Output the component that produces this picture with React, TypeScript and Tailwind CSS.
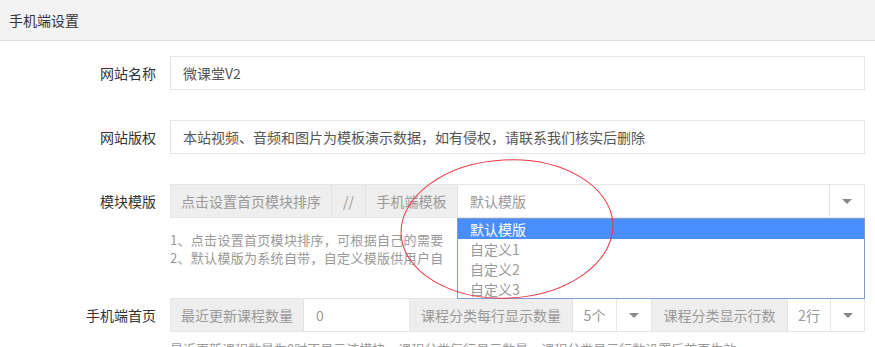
import React from 'react';

const font = "font-['Noto_Sans_CJK_SC','Noto_Sans',sans-serif]";

const Caret = () => (
  <svg viewBox="0 0 10 5" className="w-[10px] h-[5px] fill-[#888]">
    <path d="M0 0h10L5 5z" />
  </svg>
);

const Row = ({ label, children }: { label: string; children: React.ReactNode }) => (
  <div className="flex items-center">
    <div className="w-[156px] text-right text-[14px] text-[#333] shrink-0">{label}</div>
    <div className="ml-[14px] w-[695px]">{children}</div>
  </div>
);

const Addon = ({ w, children }: { w: string; children: React.ReactNode }) => (
  <div className={`${w} h-full flex items-center justify-center bg-[#eee] text-[#999] border-r border-[#e3e3e3] shrink-0`}>
    {children}
  </div>
);

export default function App() {
  return (
    <div className={`${font} relative w-[875px] h-[347px] overflow-hidden bg-white text-[14px]`}>
      {/* Header */}
      <div className="h-[41px] bg-[#f3f3f3] border-b border-[#dedede] flex items-center pl-[9px] text-[14px] text-[#333]">
        手机端设置
      </div>

      <div className="pt-[15px]">
        <Row label="网站名称">
          <div className="h-[34px] border border-[#e6e6e6] flex items-center px-[12px] text-[#555]">微课堂V2</div>
        </Row>

        <div className="mt-[30px]">
          <Row label="网站版权">
            <div className="h-[34px] border border-[#e6e6e6] flex items-center px-[12px] text-[#555]">
              本站视频、音频和图片为模板演示数据，如有侵权，请联系我们核实后删除
            </div>
          </Row>
        </div>

        <div className="mt-[30px]">
          <Row label="模块模版">
            <div className="h-[34px] border border-[#e6e6e6] flex">
              <Addon w="w-[161px]">点击设置首页模块排序</Addon>
              <Addon w="w-[34px]">//</Addon>
              <Addon w="w-[92px]">手机端模板</Addon>
              <div className="flex-1 flex items-center px-[12px] text-[#999] border-r border-[#e6e6e6]">默认模版</div>
              <div className="w-[34px] flex items-center justify-center">
                <Caret />
              </div>
            </div>
          </Row>
        </div>

        {/* help text, partly hidden under the open list */}
        <div className="ml-[170px] mt-[13px] w-[287px] overflow-hidden whitespace-nowrap text-[13px] tracking-[0.3px] leading-[18px] text-[#999]">
          <p>1、点击设置首页模块排序，可根据自己的需要</p>
          <p>2、默认模版为系统自带，自定义模版供用户自</p>
        </div>

        <div className="mt-[31px]">
          <Row label="手机端首页">
            <div className="h-[34px] border border-[#e6e6e6] flex">
              <Addon w="w-[133px]">最近更新课程数量</Addon>
              <div className="w-[106px] flex items-center px-[12px] text-[#999] border-r border-[#e6e6e6]">0</div>
              <Addon w="w-[163px]">课程分类每行显示数量</Addon>
              <div className="w-[44px] flex items-center justify-center text-[#999] border-r border-[#e6e6e6]">5个</div>
              <div className="w-[35px] flex items-center justify-center border-r border-[#e6e6e6]">
                <Caret />
              </div>
              <Addon w="w-[136px]">课程分类显示行数</Addon>
              <div className="w-[43px] flex items-center justify-center text-[#999] border-r border-[#e6e6e6]">2行</div>
              <div className="flex-1 flex items-center justify-center">
                <Caret />
              </div>
            </div>
          </Row>
        </div>

        <div className="ml-[170px] mt-[8px] text-[13px] leading-[18px] text-[#999] whitespace-nowrap">
          最近更新课程数量为0时不显示该模块，课程分类每行显示数量，课程分类显示行数设置后首页生效
        </div>
      </div>

      {/* Open dropdown list */}
      <div className="absolute left-[457px] top-[218px] w-[408px] h-[81px] bg-white border border-[#7f9bd3] text-[14px] leading-[20px]">
        <div className="bg-[#4a8efc] text-white pl-[12px]">默认模版</div>
        <div className="text-[#999] pl-[12px]">自定义1</div>
        <div className="text-[#999] pl-[12px]">自定义2</div>
        <div className="text-[#999] pl-[12px]">自定义3</div>
      </div>

      {/* Red annotation ellipse */}
      <svg className="absolute left-0 top-0 pointer-events-none" width="875" height="347">
        <ellipse cx="507" cy="229" rx="106" ry="69" fill="none" stroke="#ee3344" strokeWidth="1" transform="rotate(-3 507 229)" />
      </svg>
    </div>
  );
}
